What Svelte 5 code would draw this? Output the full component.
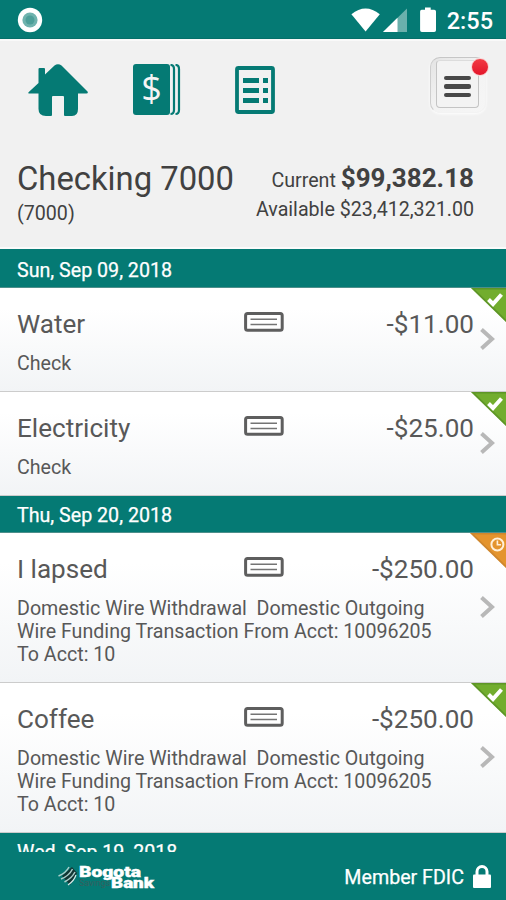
<script lang="ts">
  type Transaction = {
    name: string;
    amount: string;
    detail: string[];
    status: "cleared" | "pending";
  };

  const wire = [
    "Domestic Wire Withdrawal  Domestic Outgoing",
    "Wire Funding Transaction From Acct: 10096205",
    "To Acct: 10",
  ];

  const days: { date: string; transactions: Transaction[] }[] = [
    {
      date: "Sun, Sep 09, 2018",
      transactions: [
        { name: "Water", amount: "-$11.00", detail: ["Check"], status: "cleared" },
        { name: "Electricity", amount: "-$25.00", detail: ["Check"], status: "cleared" },
      ],
    },
    {
      date: "Thu, Sep 20, 2018",
      transactions: [
        { name: "I lapsed", amount: "-$250.00", detail: wire, status: "pending" },
        { name: "Coffee", amount: "-$250.00", detail: wire, status: "cleared" },
      ],
    },
    { date: "Wed, Sep 19, 2018", transactions: [] },
  ];
</script>

<div class="app">
  <div class="status">
    <svg width="26" height="26" viewBox="0 0 26 26">
      <circle cx="13" cy="13" r="12.2" fill="#fff" />
      <circle cx="13" cy="13" r="7.6" fill="#6fb3ae" />
      <circle cx="13" cy="13" r="4.5" fill="#4d9f99" />
    </svg>
    <div class="system">
      <svg width="86" height="26" viewBox="0 0 86 26">
        <path d="M0.4 7.2Q14.5-4.2 28.8 7.2L14.6 24.5Z" fill="#fff" />
        <path d="M32 25L56 1.5V25Z" fill="#6bb0ac" />
        <path d="M32 25L46.5 10.8V25Z" fill="#fff" />
        <path d="M70.6 2.8H74V.6H79.7V2.8H83.2Q85 2.8 85 4.6V23.2Q85 25 83.2 25H70.9Q69.1 25 69.1 23.2V4.6Q69.1 2.8 70.6 2.8Z" fill="#fff" />
      </svg>
      <span class="time">2:55</span>
    </div>
  </div>

  <header>
    <nav>
      <button class="home" aria-label="Home">
        <svg width="60" height="53" viewBox="0 0 60 53">
          <path d="M10.5 19V5Q10.5 4 11.5 4H16Q17 4 17 5V10.5L26.5 1.6Q30 -1.2 33.5 1.6L59.5 27.5Q60.5 29.5 58.5 29.5H50V45Q50 52 44 52H37Q36 52 36 51V33Q36 32 35 32H25Q24 32 24 33V51Q24 52 23 52H18Q10.5 52 10.5 45V29.5H1.5Q-.5 29.5 .8 28Z" />
        </svg>
      </button>
      <button class="accounts" aria-label="Accounts">
        <svg width="48" height="52" viewBox="0 0 48 52">
          <rect width="37" height="51" rx="3" />
          <path d="M37.5 1Q41 1 41 5V46Q41 50 37.5 50" class="edge" />
          <path d="M42.5 1Q46 1 46 5V46Q46 50 42.5 50" class="edge" />
          <text x="18.6" y="37" text-anchor="middle">$</text>
        </svg>
      </button>
      <button class="register" aria-label="Register">
        <svg width="40" height="48" viewBox="0 0 40 48">
          <rect x="2" y="2" width="36" height="44" rx="1.5" fill="none" class="frame" />
          <path d="M8 12H24V17H8ZM28 12H33V17H28ZM8 22H24V27H8ZM28 22H33V27H28ZM8 32H24V37H8ZM28 32H33V37H28Z" />
        </svg>
      </button>
      <button class="menu" aria-label="Menu">
        <span class="lines"><i></i><i></i><i></i></span>
        <span class="dot"></span>
      </button>
    </nav>

    <div class="summary">
      <div>
        <h1>Checking 7000</h1>
        <p class="number">(7000)</p>
      </div>
      <div class="balances">
        <p class="current">Current <b>$99,382.18</b></p>
        <p>Available $23,412,321.00</p>
      </div>
    </div>
  </header>

  <main>
    {#each days as day}
      <h2>{day.date}</h2>
      {#each day.transactions as item}
        <article class:long={item.detail.length > 1}>
          <div class="line">
            <span class="name">{item.name}</span>
            <svg class="check" width="40" height="20" viewBox="0 0 40 20">
              <rect x="1.6" y="1.6" width="36.6" height="16.6" rx="2" fill="#fff" stroke="#5e5e5e" stroke-width="3" />
              <path d="M6.5 7.3H33M6.5 12.5H33" stroke="#747474" stroke-width="1.6" />
            </svg>
            <span class="amount">{item.amount}</span>
          </div>
          <p>{item.detail.join("\n")}</p>
          <svg class="chevron" width="16" height="24" viewBox="0 0 16 24">
            <path d="M1.5 2.5L12 12L1.5 21.5" fill="none" stroke="#b8b8b8" stroke-width="4" />
          </svg>
          <svg class="corner" width="36" height="35" viewBox="0 0 36 35">
            {#if item.status === "cleared"}
              <path d="M1 0H36V34Z" fill="#72ad2e" />
              <path d="M1 0H36V1.5H5L36 31.5V34Z" fill="#4f8420" opacity=".55" />
              <path d="M18.5 11.5L23 16L31.5 6.5" fill="none" stroke="#fff" stroke-width="4" />
            {:else}
              <path d="M0 0H36V35Z" fill="#e4942d" />
              <path d="M0 0H36V1.5H4L36 32.5V35Z" fill="#b9772b" opacity=".5" />
              <circle cx="27.4" cy="11.5" r="6" fill="none" stroke="#fff0d9" stroke-width="2" />
              <path d="M27.4 7.5V11.8H31" fill="none" stroke="#fff0d9" stroke-width="1.6" />
            {/if}
          </svg>
        </article>
      {/each}
    {/each}
  </main>

  <footer>
    <svg class="logo" width="100" height="28" viewBox="0 0 100 28">
      <path d="M4 12L14 3L19 9L12 21Z" fill="#123533" />
      <path d="M.5 12Q8 9 11 3M3 15Q11 12 14.5 5M6.5 18Q14 14 17 8" fill="none" stroke="#a9ceca" stroke-width="1.5" />
      <path d="M10 21Q16 17 18 11" fill="none" stroke="#d8ebe9" stroke-width="1.2" />
      <text x="21" y="13.3" textLength="62" lengthAdjust="spacingAndGlyphs" class="brand">Bogota</text>
      <text x="21" y="21.5" textLength="31" lengthAdjust="spacingAndGlyphs" class="savings">Savings</text>
      <text x="53" y="24.3" textLength="43" lengthAdjust="spacingAndGlyphs" class="brand">Bank</text>
    </svg>
    <div class="member">
      <span>Member FDIC</span>
      <svg width="18" height="24" viewBox="0 0 18 24">
        <path d="M4 11V6.5A5 5 0 0 1 14 6.5V11" fill="none" stroke="#fff" stroke-width="3" />
        <rect y="9.5" width="18" height="13.5" rx="1" fill="#fff" />
      </svg>
    </div>
  </footer>
</div>

<style>
  :global(body) {
    margin: 0;
  }
  .app {
    --teal: #057a74;
    width: 506px;
    height: 900px;
    display: flex;
    flex-direction: column;
    overflow: hidden;
    background: #f1f1f1;
    color: #414141;
    font-family: Roboto, sans-serif;
    font-size: 19.65px;
    line-height: 23px;
  }
  svg {
    display: block;
    flex: none;
  }
  h1,
  h2,
  p {
    margin: 0;
    font-weight: 400;
  }
  .status {
    height: 39px;
    box-sizing: border-box;
    padding: 2px 13px 0 17px;
    display: flex;
    align-items: center;
    justify-content: space-between;
    background: var(--teal);
    border-bottom: 1px solid #05706a;
  }
  .system {
    display: flex;
    align-items: center;
    gap: 10px;
  }
  .time {
    color: #fff;
    font-size: 23.5px;
    font-weight: 500;
    line-height: 26px;
    padding-top: 1px;
  }
  header {
    height: 210px;
    box-sizing: border-box;
    border-top: 2px solid #f9f9f9;
    border-bottom: 2px solid #fbfbfb;
  }
  nav {
    height: 117px;
    display: flex;
    align-items: flex-start;
    padding: 14px 20px 0 28px;
    box-sizing: border-box;
  }
  nav button {
    border: 0;
    padding: 0;
    background: none;
    fill: var(--teal);
  }
  .home {
    margin-top: 9px;
  }
  .accounts {
    margin: 9px 0 0 45px;
  }
  .accounts text {
    fill: #f4f4f4;
    font: 36px "Open Sans", sans-serif;
  }
  .edge {
    fill: none;
    stroke: var(--teal);
    stroke-width: 2.2;
  }
  .register {
    margin: 11px 0 0 54px;
  }
  .frame {
    stroke: var(--teal);
    stroke-width: 3.8;
  }
  nav .menu {
    position: relative;
    width: 56px;
    height: 56px;
    margin: 2px 0 0 auto;
    border-radius: 10px;
    box-shadow: 0 1px 3px #fff;
    background: linear-gradient(135deg, #e4e4e4, #f3f3f3 50%, #f6f6f6);
    border: 1.5px solid #f3f3f3;
    border-top-color: #c6c6c6;
    border-left-color: #cecece;
  }
  .lines {
    position: absolute;
    left: 5px;
    top: 2px;
    width: 43px;
    height: 48px;
    border: 1.5px solid #c4c4c4;
    border-top-color: #dcdcdc;
    border-radius: 4px;
    background: #f3f3f3;
    box-sizing: border-box;
    padding-top: 5px;
    display: flex;
    flex-direction: column;
    align-items: center;
    justify-content: center;
    gap: 4px;
  }
  .lines i {
    width: 27px;
    height: 4.5px;
    border-radius: 2px;
    background: #484848;
  }
  .dot {
    position: absolute;
    right: -4px;
    top: 0;
    width: 16px;
    height: 16px;
    border-radius: 50%;
    background: linear-gradient(#f23b44, #e3152a);
    border: 1px solid #fbd5d5;
  }
  .summary {
    display: flex;
    justify-content: space-between;
    padding: 0 32px 0 17px;
  }
  h1 {
    font-size: 32.8px;
    line-height: 42px;
  }
  .number {
    padding-top: 2px;
  }
  .balances {
    text-align: right;
    padding-top: 3px;
  }
  .balances p {
    line-height: 23px;
  }
  .balances .current {
    line-height: 34px;
  }
  b {
    font-size: 26px;
    font-weight: 700;
  }
  main {
    height: 603px;
    overflow: hidden;
  }
  h2 {
    box-sizing: border-box;
    height: 39px;
    padding: 9px 17px 0;
    font-size: 19.65px;
    line-height: 26px;
    color: #fff;
    background: var(--teal);
    border-bottom: 1px solid #4d8f8b;
    -webkit-text-stroke: 0.25px #fff;
  }
  h2:not(:first-child) {
    height: 37px;
    padding-top: 7px;
  }
  article {
    position: relative;
    height: 104px;
    box-sizing: border-box;
    padding: 19px 32px 0 17px;
    color: #585858;
    background: linear-gradient(#fff 20%, #f2f4f6);
    border-bottom: 1px solid #ccc;
  }
  article.long {
    height: 150px;
  }
  .line {
    display: grid;
    grid-template-columns: 227px 40px 1fr;
    font-size: 26.1px;
    line-height: 34px;
  }
  .check {
    margin-top: 5px;
  }
  .amount {
    text-align: right;
  }
  article p {
    white-space: pre;
    margin-top: 11px;
  }
  .chevron {
    position: absolute;
    right: 10px;
    top: 39px;
  }
  .long .chevron {
    top: 62px;
  }
  .corner {
    position: absolute;
    right: 0;
    top: 0;
  }
  footer {
    height: 48px;
    box-sizing: border-box;
    padding: 12px 15px 0 58px;
    display: flex;
    justify-content: space-between;
    align-items: flex-start;
    background: var(--teal);
    color: #fff;
  }
  .brand {
    fill: #fff;
    stroke: #fff;
    stroke-width: 0.4px;
    font: 900 14px Roboto, sans-serif;
  }
  .savings {
    fill: #35605e;
    font: 9px Roboto, sans-serif;
  }
  .member {
    display: flex;
    align-items: center;
    gap: 9px;
  }
  .member span {
    padding-top: 2px;
    -webkit-text-stroke: 0.25px #fff;
  }
</style>
